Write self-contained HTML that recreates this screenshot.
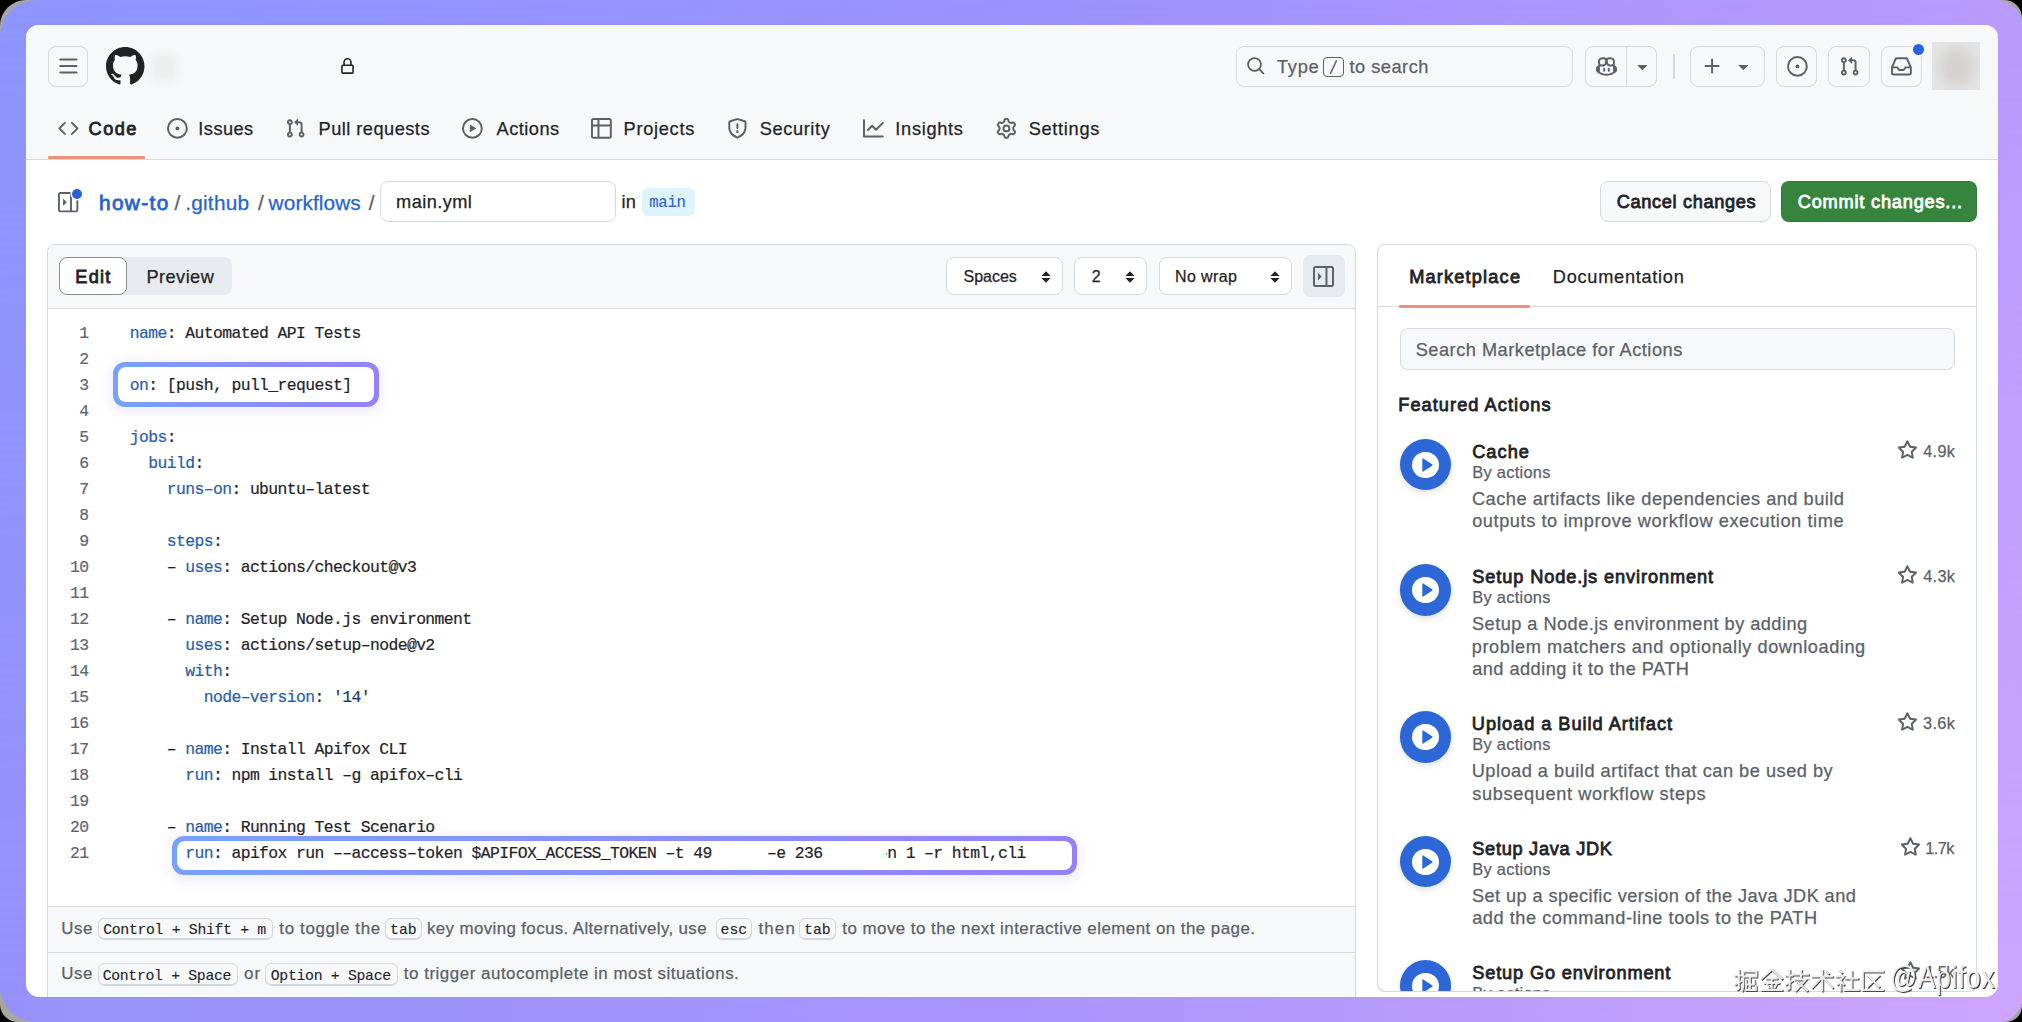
<!DOCTYPE html>
<html><head><meta charset="utf-8">
<style>
*{box-sizing:border-box;margin:0;padding:0}
html,body{width:2022px;height:1022px;overflow:hidden;background:#000}
body{font-family:"Liberation Sans",sans-serif;color:#1f2328;position:relative}
.bg0{position:absolute;left:0;top:0;width:2022px;height:1022px;border-radius:26px 18px 16px 18px;background:#a7a7a2}
.bg{position:absolute;left:0;top:0;width:2022px;height:1022px;border-radius:36px 26px 24px 36px;overflow:hidden;background:linear-gradient(90deg,rgb(140,150,251) 0%,rgb(155,145,252) 50%,rgb(185,155,253) 100%)}
.bg2{position:absolute;left:0;top:0;width:2022px;height:1022px;background:linear-gradient(90deg,rgb(150,145,250) 0%,rgb(168,148,252) 50%,rgb(206,165,253) 100%);-webkit-mask-image:linear-gradient(to bottom,transparent,#000);mask-image:linear-gradient(to bottom,transparent,#000)}
.card{position:absolute;left:0;top:0;width:2022px;height:1022px;background:#fff;clip-path:inset(25px 24px 25px 26px round 13px)}
.a{position:absolute}
svg{display:block;position:absolute;overflow:visible}
.t{position:absolute;white-space:pre;line-height:1}
</style></head><body>
<div class="bg0"></div><div class="bg"><div class="bg2"></div></div>
<div class="card">
<div class="a" style="left:26px;top:25px;width:1972px;height:135px;background:#f6f8fa;border-bottom:1px solid #d4d9de"></div>
<div class="a" style="left:48px;top:46px;width:40px;height:41px;border:1px solid #d4d9de;border-radius:8px;background:#f6f8fa"></div>
<svg style="left:57.70px;top:56.20px;" width="20.8" height="20.8" viewBox="0 0 16 16" fill="#5a6168"><path d="M1 2.75A.75.75 0 0 1 1.75 2h12.5a.75.75 0 0 1 0 1.5H1.75A.75.75 0 0 1 1 2.75Zm0 5A.75.75 0 0 1 1.75 7h12.5a.75.75 0 0 1 0 1.5H1.75A.75.75 0 0 1 1 7.75ZM1.75 12h12.5a.75.75 0 0 1 0 1.5H1.75a.75.75 0 0 1 0-1.5Z"/></svg>
<svg style="left:106.00px;top:47.00px;" width="38.5" height="38.5" viewBox="0 0 16 16" fill="#1f2328"><path d="M8 0c4.42 0 8 3.58 8 8a8.013 8.013 0 0 1-5.45 7.59c-.4.08-.55-.17-.55-.38 0-.27.01-1.13.01-2.2 0-.75-.25-1.23-.54-1.48 1.78-.2 3.65-.88 3.65-3.95 0-.88-.31-1.59-.82-2.15.08-.2.36-1.02-.08-2.12 0 0-.67-.22-2.2.82-.64-.18-1.32-.27-2-.27-.68 0-1.36.09-2 .27-1.53-1.03-2.2-.82-2.2-.82-.44 1.1-.16 1.92-.08 2.12-.51.56-.82 1.28-.82 2.15 0 3.06 1.86 3.75 3.64 3.95-.23.2-.44.55-.51 1.07-.46.21-1.61.55-2.33-.66-.15-.24-.6-.83-1.23-.82-.67.01-.27.38.01.53.34.19.73.9.82 1.13.16.45.68 1.31 2.69.94 0 .67.01 1.3.01 1.49 0 .21-.15.45-.55.38A7.995 7.995 0 0 1 0 8c0-4.42 3.58-8 8-8Z"/></svg>
<div class="a" style="left:152px;top:54px;width:24px;height:26px;background:#eceded;filter:blur(4px);border-radius:4px"></div>
<svg style="left:338.80px;top:57.50px;" width="17" height="17" viewBox="0 0 16 16" fill="#1f2328"><path d="M4 4a4 4 0 0 1 8 0v2h.25c.966 0 1.75.784 1.75 1.75v5.5A1.75 1.75 0 0 1 12.25 15h-8.5A1.75 1.75 0 0 1 2 13.25v-5.5C2 6.784 2.784 6 3.75 6H4Zm8.25 3.5h-8.5a.25.25 0 0 0-.25.25v5.5c0 .138.112.25.25.25h8.5a.25.25 0 0 0 .25-.25v-5.5a.25.25 0 0 0-.25-.25ZM10.5 6V4a2.5 2.5 0 1 0-5 0v2Z"/></svg>
<div class="a" style="left:1236px;top:46px;width:337px;height:41px;border:1px solid #d4d9de;border-radius:8px;background:#f6f8fa"></div>
<svg style="left:1246.00px;top:56.30px;" width="19.5" height="19.5" viewBox="0 0 16 16" fill="#5a6168"><path d="M10.68 11.74a6 6 0 0 1-7.922-8.982 6 6 0 0 1 8.982 7.922l3.04 3.04a.749.749 0 0 1-.326 1.275.749.749 0 0 1-.734-.215ZM11.5 7a4.499 4.499 0 1 0-8.997 0A4.499 4.499 0 0 0 11.5 7Z"/></svg>
<div class="t" style="left:1276.94px;top:58px;font-size:18.2px;color:#5a6168;font-family:'Liberation Sans',sans-serif;-webkit-text-stroke:0.25px #5a6168;letter-spacing:0.778px;">Type</div>
<div class="a" style="left:1323px;top:57px;width:21px;height:20px;border:1px solid #5a6168;border-radius:4px"></div>
<svg style="left:1323px;top:57px" width="21" height="20" viewBox="0 0 21 20"><path d="M7.6 16.3 L13.4 3.7" stroke="#5a6168" stroke-width="1.5" stroke-linecap="round"/></svg>
<div class="t" style="left:1349.52px;top:58px;font-size:18.2px;color:#5a6168;font-family:'Liberation Sans',sans-serif;-webkit-text-stroke:0.25px #5a6168;letter-spacing:0.504px;">to search</div>
<div class="a" style="left:1585px;top:46px;width:72px;height:41px;border:1px solid #d4d9de;border-radius:8px;background:#f6f8fa"></div>
<div class="a" style="left:1626px;top:46px;width:1px;height:41px;background:#d4d9de"></div>
<svg style="left:1595.50px;top:55.70px;" width="21" height="21" viewBox="0 0 16 16" fill="#5a6168"><path d="M7.998 15.035c-4.562 0-7.873-2.914-7.998-3.749V9.338c.085-.628.677-1.686 1.588-2.065.013-.07.024-.143.036-.218.029-.183.06-.384.126-.612-.201-.508-.254-1.084-.254-1.656 0-.87.128-1.769.693-2.484.579-.733 1.494-1.124 2.724-1.261 1.206-.134 2.262.034 2.944.765.05.053.096.108.139.165.044-.057.094-.112.143-.165.682-.731 1.738-.899 2.944-.765 1.23.137 2.145.528 2.724 1.261.566.715.693 1.614.693 2.484 0 .572-.053 1.148-.254 1.656.066.228.098.429.126.612.012.076.024.148.037.218.924.385 1.522 1.471 1.591 2.095v1.872c0 .766-3.351 3.795-8.002 3.795Zm0-1.485c2.28 0 4.584-1.11 5.002-1.433V7.862l-.023-.116c-.49.21-1.075.291-1.727.291-1.146 0-2.059-.327-2.71-.991A3.222 3.222 0 0 1 8 6.303a3.24 3.24 0 0 1-.544.743c-.65.664-1.563.991-2.71.991-.652 0-1.236-.081-1.727-.291l-.023.116v4.255c.419.323 2.722 1.433 5.002 1.433ZM6.762 2.83c-.193-.206-.637-.413-1.682-.297-1.019.113-1.479.404-1.713.7-.247.312-.369.789-.369 1.554 0 .793.129 1.171.308 1.371.162.181.519.379 1.442.379.853 0 1.339-.235 1.638-.54.315-.322.527-.827.617-1.553.117-.935-.037-1.395-.241-1.614Zm4.155-.297c-1.044-.116-1.488.091-1.681.297-.204.219-.359.679-.242 1.614.091.726.303 1.231.618 1.553.299.305.784.54 1.638.54.922 0 1.28-.198 1.442-.379.179-.2.308-.578.308-1.371 0-.765-.123-1.242-.37-1.554-.233-.296-.693-.587-1.713-.7Z"/><path d="M6.25 9.037a.75.75 0 0 1 .75.75v1.501a.75.75 0 0 1-1.5 0V9.787a.75.75 0 0 1 .75-.75Zm4.25.75v1.501a.75.75 0 0 1-1.5 0V9.787a.75.75 0 0 1 1.5 0Z"/></svg>
<svg style="left:1631.50px;top:55.80px;" width="20.8" height="20.8" viewBox="0 0 16 16" fill="#5a6168"><path d="m4.427 7.427 3.396 3.396a.25.25 0 0 0 .354 0l3.396-3.396A.25.25 0 0 0 11.396 7H4.604a.25.25 0 0 0-.177.427Z"/></svg>
<div class="a" style="left:1673px;top:54px;width:2px;height:25px;background:#d4d9de"></div>
<div class="a" style="left:1690px;top:46px;width:75px;height:41px;border:1px solid #d4d9de;border-radius:8px;background:#f6f8fa"></div>
<svg style="left:1701.60px;top:55.80px;" width="20.8" height="20.8" viewBox="0 0 16 16" fill="#5a6168"><path d="M7.75 2a.75.75 0 0 1 .75.75V7h4.25a.75.75 0 0 1 0 1.5H8.5v4.25a.75.75 0 0 1-1.5 0V8.5H2.75a.75.75 0 0 1 0-1.5H7V2.75A.75.75 0 0 1 7.75 2Z"/></svg>
<svg style="left:1733.30px;top:55.80px;" width="20.8" height="20.8" viewBox="0 0 16 16" fill="#5a6168"><path d="m4.427 7.427 3.396 3.396a.25.25 0 0 0 .354 0l3.396-3.396A.25.25 0 0 0 11.396 7H4.604a.25.25 0 0 0-.177.427Z"/></svg>
<div class="a" style="left:1776px;top:46px;width:41px;height:41px;border:1px solid #d4d9de;border-radius:8px;background:#f6f8fa"></div>
<svg style="left:1787.00px;top:56.00px;" width="20.8" height="20.8" viewBox="0 0 16 16" fill="#5a6168"><path d="M8 9.5a1.5 1.5 0 1 0 0-3 1.5 1.5 0 0 0 0 3Z"/><path d="M8 0a8 8 0 1 1 0 16A8 8 0 0 1 8 0ZM1.5 8a6.5 6.5 0 1 0 13 0 6.5 6.5 0 0 0-13 0Z"/></svg>
<div class="a" style="left:1828px;top:46px;width:42px;height:41px;border:1px solid #d4d9de;border-radius:8px;background:#f6f8fa"></div>
<svg style="left:1839.00px;top:56.00px;" width="20.8" height="20.8" viewBox="0 0 16 16" fill="#5a6168"><path d="M1.5 3.25a2.25 2.25 0 1 1 3 2.122v5.256a2.251 2.251 0 1 1-1.5 0V5.372A2.25 2.25 0 0 1 1.5 3.25Zm5.677-.177L9.573.677A.25.25 0 0 1 10 .854V2.5h1A2.5 2.5 0 0 1 13.5 5v5.628a2.251 2.251 0 1 1-1.5 0V5a1 1 0 0 0-1-1h-1v1.646a.25.25 0 0 1-.427.177L7.177 3.427a.25.25 0 0 1 0-.354ZM3.75 2.5a.75.75 0 1 0 0 1.5.75.75 0 0 0 0-1.5Zm0 9.5a.75.75 0 1 0 0 1.5.75.75 0 0 0 0-1.5Zm8.25.75a.75.75 0 1 0 1.5 0 .75.75 0 0 0-1.5 0Z"/></svg>
<div class="a" style="left:1881px;top:46px;width:41px;height:41px;border:1px solid #d4d9de;border-radius:8px;background:#f6f8fa"></div>
<svg style="left:1891.00px;top:55.50px;" width="20.8" height="20.8" viewBox="0 0 16 16" fill="#5a6168"><path d="M2.8 2.06A1.75 1.75 0 0 1 4.41 1h7.18c.7 0 1.333.417 1.61 1.06l2.74 6.395c.04.093.06.194.06.295v4.5A1.75 1.75 0 0 1 14.25 15H1.75A1.75 1.75 0 0 1 0 13.25v-4.5c0-.101.02-.202.06-.295Zm1.61.44a.25.25 0 0 0-.23.152L1.887 8H4.75a.75.75 0 0 1 .6.3L6.625 10h2.75l1.275-1.7a.75.75 0 0 1 .6-.3h2.863L11.82 2.652a.25.25 0 0 0-.23-.152Zm10.09 7h-2.875l-1.275 1.7a.75.75 0 0 1-.6.3h-3.5a.75.75 0 0 1-.6-.3L4.375 9.5H1.5v3.75c0 .138.112.25.25.25h12.5a.25.25 0 0 0 .25-.25Z"/></svg>
<div class="a" style="left:1912.8px;top:43.7px;width:11.0px;height:11.0px;border-radius:50%;background:#2563e0;box-shadow:0 0 0 1.5px #f6f8fa"></div>
<div class="a" style="left:1932px;top:42px;width:48px;height:48px;overflow:hidden;background:#e4e4e4"><div class="a" style="left:8px;top:6px;width:34px;height:38px;border-radius:50%;background:#d4d1d0;filter:blur(6px)"></div></div>
<svg style="left:57.50px;top:118.35px;" width="20.8" height="20.8" viewBox="0 0 16 16" fill="#5a6168"><path d="m11.28 3.22 4.25 4.25a.75.75 0 0 1 0 1.06l-4.25 4.25a.749.749 0 0 1-1.275-.326.749.749 0 0 1 .215-.734L13.94 8l-3.72-3.72a.749.749 0 0 1 .326-1.275.749.749 0 0 1 .734.215Zm-6.56 0a.751.751 0 0 1 1.042.018.751.751 0 0 1 .018 1.042L2.06 8l3.72 3.72a.749.749 0 0 1-.326 1.275.749.749 0 0 1-.734-.215L.47 8.53a.75.75 0 0 1 0-1.06Z"/></svg>
<div class="t" style="left:88.59px;top:120px;font-size:18.2px;color:#1f2328;font-family:'Liberation Sans',sans-serif;-webkit-text-stroke:0.8px #1f2328;letter-spacing:1.443px;">Code</div>
<svg style="left:167.00px;top:118.35px;" width="20.8" height="20.8" viewBox="0 0 16 16" fill="#5a6168"><path d="M8 9.5a1.5 1.5 0 1 0 0-3 1.5 1.5 0 0 0 0 3Z"/><path d="M8 0a8 8 0 1 1 0 16A8 8 0 0 1 8 0ZM1.5 8a6.5 6.5 0 1 0 13 0 6.5 6.5 0 0 0-13 0Z"/></svg>
<div class="t" style="left:198.36px;top:120px;font-size:18.2px;color:#1f2328;font-family:'Liberation Sans',sans-serif;-webkit-text-stroke:0.25px #1f2328;letter-spacing:0.437px;">Issues</div>
<svg style="left:284.60px;top:118.35px;" width="20.8" height="20.8" viewBox="0 0 16 16" fill="#5a6168"><path d="M1.5 3.25a2.25 2.25 0 1 1 3 2.122v5.256a2.251 2.251 0 1 1-1.5 0V5.372A2.25 2.25 0 0 1 1.5 3.25Zm5.677-.177L9.573.677A.25.25 0 0 1 10 .854V2.5h1A2.5 2.5 0 0 1 13.5 5v5.628a2.251 2.251 0 1 1-1.5 0V5a1 1 0 0 0-1-1h-1v1.646a.25.25 0 0 1-.427.177L7.177 3.427a.25.25 0 0 1 0-.354ZM3.75 2.5a.75.75 0 1 0 0 1.5.75.75 0 0 0 0-1.5Zm0 9.5a.75.75 0 1 0 0 1.5.75.75 0 0 0 0-1.5Zm8.25.75a.75.75 0 1 0 1.5 0 .75.75 0 0 0-1.5 0Z"/></svg>
<div class="t" style="left:318.54px;top:120px;font-size:18.2px;color:#1f2328;font-family:'Liberation Sans',sans-serif;-webkit-text-stroke:0.25px #1f2328;letter-spacing:0.484px;">Pull requests</div>
<svg style="left:462.40px;top:118.35px;" width="20.8" height="20.8" viewBox="0 0 16 16" fill="#5a6168"><path d="M8 0a8 8 0 1 1 0 16A8 8 0 0 1 8 0ZM1.5 8a6.5 6.5 0 1 0 13 0 6.5 6.5 0 0 0-13 0Zm4.879-2.773 4.264 2.559a.25.25 0 0 1 0 .428l-4.264 2.559A.25.25 0 0 1 6 10.559V5.442a.25.25 0 0 1 .379-.215Z"/></svg>
<div class="t" style="left:496.50px;top:120px;font-size:18.2px;color:#1f2328;font-family:'Liberation Sans',sans-serif;-webkit-text-stroke:0.25px #1f2328;letter-spacing:0.505px;">Actions</div>
<svg style="left:591.00px;top:118.35px;" width="20.8" height="20.8" viewBox="0 0 16 16" fill="#5a6168"><path d="M0 1.75C0 .784.784 0 1.75 0h12.5C15.216 0 16 .784 16 1.75v12.5A1.75 1.75 0 0 1 14.25 16H1.75A1.75 1.75 0 0 1 0 14.25ZM6.5 6.5v8h7.75a.25.25 0 0 0 .25-.25V6.5Zm8-1.5V1.75a.25.25 0 0 0-.25-.25H6.5V5Zm-13 1.5v7.750c0 .138.112.25.25.25H5v-8ZM5 5V1.5H1.75a.25.25 0 0 0-.25.25V5Z"/></svg>
<div class="t" style="left:623.54px;top:120px;font-size:18.2px;color:#1f2328;font-family:'Liberation Sans',sans-serif;-webkit-text-stroke:0.25px #1f2328;letter-spacing:0.720px;">Projects</div>
<svg style="left:727.00px;top:118.35px;" width="20.8" height="20.8" viewBox="0 0 16 16" fill="#5a6168"><path d="M7.467.133a1.748 1.748 0 0 1 1.066 0l5.25 1.68A1.75 1.75 0 0 1 15 3.48V7c0 1.566-.32 3.182-1.303 4.682-.983 1.498-2.585 2.813-5.032 3.855a1.697 1.697 0 0 1-1.33 0c-2.447-1.042-4.049-2.357-5.032-3.855C1.32 10.182 1 8.566 1 7V3.48a1.755 1.755 0 0 1 1.217-1.667Zm.61 1.429a.25.25 0 0 0-.153 0l-5.25 1.68a.25.25 0 0 0-.174.238V7c0 1.358.275 2.666 1.057 3.86.784 1.194 2.121 2.34 4.366 3.297a.196.196 0 0 0 .154 0c2.245-.956 3.582-2.104 4.366-3.298C13.225 9.666 13.5 8.36 13.5 7V3.48a.251.251 0 0 0-.174-.237l-5.25-1.68ZM8.75 4.75v3a.75.75 0 0 1-1.5 0v-3a.75.75 0 0 1 1.5 0ZM9 10.5a1 1 0 1 1-2 0 1 1 0 0 1 2 0Z"/></svg>
<div class="t" style="left:759.69px;top:120px;font-size:18.2px;color:#1f2328;font-family:'Liberation Sans',sans-serif;-webkit-text-stroke:0.25px #1f2328;letter-spacing:0.621px;">Security</div>
<svg style="left:862.50px;top:118.35px;" width="20.8" height="20.8" viewBox="0 0 16 16" fill="#5a6168"><path d="M1.5 1.75V13.5h13.75a.75.75 0 0 1 0 1.5H.75a.75.75 0 0 1-.75-.75V1.75a.75.75 0 0 1 1.5 0Zm14.28 2.53-5.25 5.25a.75.75 0 0 1-1.06 0L7 7.06 4.28 9.78a.751.751 0 0 1-1.042-.018.751.751 0 0 1-.018-1.042l3.25-3.25a.75.75 0 0 1 1.06 0L10 7.94l4.72-4.72a.751.751 0 0 1 1.042.018.751.751 0 0 1 .018 1.042Z"/></svg>
<div class="t" style="left:895.36px;top:120px;font-size:18.2px;color:#1f2328;font-family:'Liberation Sans',sans-serif;-webkit-text-stroke:0.25px #1f2328;letter-spacing:0.688px;">Insights</div>
<svg style="left:996.00px;top:118.35px;" width="20.8" height="20.8" viewBox="0 0 16 16" fill="#5a6168"><path d="M8 0a8.2 8.2 0 0 1 .701.031C9.444.095 9.99.645 10.16 1.29l.288 1.107c.018.066.079.158.212.224.231.114.454.243.668.386.123.082.233.09.299.071l1.103-.303c.644-.176 1.392.021 1.82.63.27.385.506.792.704 1.218.315.675.111 1.422-.364 1.891l-.814.806c-.049.048-.098.147-.088.294.016.257.016.515 0 .772-.01.147.038.246.088.294l.814.806c.475.469.679 1.216.364 1.891a7.977 7.977 0 0 1-.704 1.217c-.428.61-1.176.807-1.82.63l-1.102-.302c-.067-.019-.177-.011-.3.071a5.909 5.909 0 0 1-.668.386c-.133.066-.194.158-.211.224l-.29 1.106c-.168.646-.715 1.196-1.458 1.26a8.006 8.006 0 0 1-1.402 0c-.743-.064-1.289-.614-1.458-1.26l-.289-1.106c-.018-.066-.079-.158-.212-.224a5.738 5.738 0 0 1-.668-.386c-.123-.082-.233-.09-.299-.071l-1.103.303c-.644.176-1.392-.021-1.82-.63a8.12 8.12 0 0 1-.704-1.218c-.315-.675-.111-1.422.363-1.891l.815-.806c.05-.048.098-.147.088-.294a6.214 6.214 0 0 1 0-.772c.01-.147-.038-.246-.088-.294l-.815-.806C.635 6.045.431 5.298.746 4.623a7.92 7.92 0 0 1 .704-1.217c.428-.61 1.176-.807 1.82-.63l1.102.302c.067.019.177.011.3-.071.214-.143.437-.272.668-.386.133-.066.194-.158.211-.224l.29-1.106C6.009.645 6.556.095 7.299.03 7.53.01 7.764 0 8 0Zm-.571 1.525c-.036.003-.108.036-.137.146l-.289 1.105c-.147.561-.549.967-.998 1.189-.173.086-.34.183-.5.29-.417.278-.97.423-1.529.27l-1.103-.303c-.109-.03-.175.016-.195.045-.22.312-.412.644-.573.99-.014.031-.021.11.059.19l.815.806c.411.406.562.957.53 1.456a4.709 4.709 0 0 0 0 .582c.032.499-.119 1.05-.53 1.456l-.815.806c-.081.08-.073.159-.059.19.162.346.353.677.573.989.02.03.085.076.195.046l1.102-.303c.56-.153 1.113-.008 1.53.27.161.107.328.204.501.29.447.222.85.629.997 1.189l.289 1.105c.029.109.101.143.137.146a6.6 6.6 0 0 0 1.142 0c.036-.003.108-.036.137-.146l.289-1.105c.147-.561.549-.967.998-1.189.173-.086.34-.183.5-.29.417-.278.97-.423 1.529-.27l1.103.303c.109.029.175-.016.195-.045.22-.313.411-.644.573-.99.014-.031.021-.11-.059-.19l-.815-.806c-.411-.406-.562-.957-.53-1.456a4.709 4.709 0 0 0 0-.582c-.032-.499.119-1.05.53-1.456l.815-.806c.081-.08.073-.159.059-.19a6.464 6.464 0 0 0-.573-.989c-.02-.03-.085-.076-.195-.046l-1.102.303c-.56.153-1.113.008-1.53-.27a4.44 4.44 0 0 0-.501-.29c-.447-.222-.85-.629-.997-1.189l-.289-1.105c-.029-.11-.101-.143-.137-.146a6.6 6.6 0 0 0-1.142 0ZM11 8a3 3 0 1 1-6 0 3 3 0 0 1 6 0ZM9.5 8a1.5 1.5 0 1 0-3.001.001A1.5 1.5 0 0 0 9.5 8Z"/></svg>
<div class="t" style="left:1028.69px;top:120px;font-size:18.2px;color:#1f2328;font-family:'Liberation Sans',sans-serif;-webkit-text-stroke:0.25px #1f2328;letter-spacing:0.702px;">Settings</div>
<div class="a" style="left:48px;top:156px;width:97px;height:3px;background:#ea927b;border-radius:1px"></div>
<svg style="left:57.90px;top:191.90px;" width="20.3" height="20.3" viewBox="0 0 16 16" fill="#5a6168"><path d="M6.823 7.823a.25.25 0 0 1 0 .354l-2.396 2.396A.25.25 0 0 1 4 10.396V5.604a.25.25 0 0 1 .427-.177Z"/><path d="M1.75 0h12.5C15.216 0 16 .784 16 1.75v12.5A1.75 1.75 0 0 1 14.25 16H1.75A1.75 1.75 0 0 1 0 14.25V1.75C0 .784.784 0 1.75 0ZM1.5 1.75v12.5c0 .138.112.25.25.25H9.5v-13H1.75a.25.25 0 0 0-.25.25ZM11 14.5h3.25a.25.25 0 0 0 .25-.25V1.75a.25.25 0 0 0-.25-.25H11Z"/></svg>
<div class="a" style="left:72.2px;top:188.8px;width:10.200000000000003px;height:10.199999999999989px;border-radius:50%;background:#2563d9;box-shadow:0 0 0 1.5px #fff"></div>
<div class="t" style="left:98.94px;top:193px;font-size:20.8px;color:#2763cf;font-family:'Liberation Sans',sans-serif;-webkit-text-stroke:0.8px #2763cf;letter-spacing:1.381px;">how-to</div>
<div class="t" style="left:174.50px;top:193px;font-size:20.8px;color:#5a6168;font-family:'Liberation Sans',sans-serif;-webkit-text-stroke:0.25px #5a6168;">/</div>
<div class="t" style="left:185.13px;top:193px;font-size:20.8px;color:#2763cf;font-family:'Liberation Sans',sans-serif;-webkit-text-stroke:0.25px #2763cf;letter-spacing:0.257px;">.github</div>
<div class="t" style="left:258.00px;top:193px;font-size:20.8px;color:#5a6168;font-family:'Liberation Sans',sans-serif;-webkit-text-stroke:0.25px #5a6168;">/</div>
<div class="t" style="left:268.60px;top:193px;font-size:20.8px;color:#2763cf;font-family:'Liberation Sans',sans-serif;-webkit-text-stroke:0.25px #2763cf;letter-spacing:0.102px;">workflows</div>
<div class="t" style="left:368.80px;top:193px;font-size:20.8px;color:#5a6168;font-family:'Liberation Sans',sans-serif;-webkit-text-stroke:0.25px #5a6168;">/</div>
<div class="a" style="left:380px;top:181px;width:236px;height:41px;border:1px solid #d4d9de;border-radius:8px;background:#fff"></div>
<div class="t" style="left:396.11px;top:193px;font-size:18.2px;color:#1f2328;font-family:'Liberation Sans',sans-serif;-webkit-text-stroke:0.25px #1f2328;letter-spacing:0.427px;">main.yml</div>
<div class="t" style="left:621.61px;top:193px;font-size:18.2px;color:#1f2328;font-family:'Liberation Sans',sans-serif;-webkit-text-stroke:0.25px #1f2328;">in</div>
<div class="a" style="left:642px;top:188px;width:53px;height:28px;background:#ddf4ff;border-radius:6px"></div>
<div class="t" style="left:649.22px;top:196px;font-size:15.6px;color:#2763cf;font-family:'Liberation Mono',monospace;-webkit-text-stroke:0.12px #2763cf;letter-spacing:-0.269px;">main</div>
<div class="a" style="left:1600px;top:181px;width:171px;height:41px;border:1px solid #d4d9de;border-radius:8px;background:#f6f8fa"></div>
<div class="t" style="left:1616.79px;top:193px;font-size:18.2px;color:#1f2328;font-family:'Liberation Sans',sans-serif;-webkit-text-stroke:0.8px #1f2328;letter-spacing:0.652px;">Cancel changes</div>
<div class="a" style="left:1781px;top:181px;width:196px;height:41px;background:#36843d;border-radius:8px;box-shadow:inset 0 0 0 1px rgba(0,0,0,0.08)"></div>
<div class="t" style="left:1797.79px;top:193px;font-size:18.2px;color:#ffffff;font-family:'Liberation Sans',sans-serif;-webkit-text-stroke:0.8px #ffffff;letter-spacing:0.792px;">Commit changes...</div>
<div class="a" style="left:47px;top:244px;width:1309px;height:786px;border:1px solid #d4d9de;border-radius:8px;background:#fff"></div>
<div class="a" style="left:48px;top:245px;width:1307px;height:63px;background:#f6f8fa;border-radius:7px 7px 0 0"></div>
<div class="a" style="left:48px;top:308px;width:1307px;height:1px;background:#d4d9de"></div>
<div class="a" style="left:59px;top:257px;width:173px;height:38px;background:#e7ebef;border-radius:8px"></div>
<div class="a" style="left:59px;top:257px;width:68px;height:38px;background:#fff;border:1.3px solid #858f99;border-radius:8px"></div>
<div class="t" style="left:75.34px;top:268px;font-size:18.2px;color:#1f2328;font-family:'Liberation Sans',sans-serif;-webkit-text-stroke:0.8px #1f2328;letter-spacing:1.171px;">Edit</div>
<div class="t" style="left:146.44px;top:268px;font-size:18.2px;color:#1f2328;font-family:'Liberation Sans',sans-serif;-webkit-text-stroke:0.25px #1f2328;letter-spacing:0.449px;">Preview</div>
<div class="a" style="left:946px;top:257px;width:117px;height:38px;border:1px solid #d4d9de;border-radius:8px;background:#fff"></div>
<div class="t" style="left:963.50px;top:269px;font-size:16px;color:#1f2328;font-family:'Liberation Sans',sans-serif;-webkit-text-stroke:0.25px #1f2328;letter-spacing:-0.019px;">Spaces</div>
<svg style="left:1040.8px;top:270.5px" width="10" height="12" viewBox="0 0 10 12" fill="#1f2328"><path d="M5 0.3 L9.6 5 H0.4Z M5 11.7 L9.6 7 H0.4Z"/></svg>
<div class="a" style="left:1074px;top:257px;width:73px;height:38px;border:1px solid #d4d9de;border-radius:8px;background:#fff"></div>
<div class="t" style="left:1091.70px;top:269px;font-size:16px;color:#1f2328;font-family:'Liberation Sans',sans-serif;-webkit-text-stroke:0.25px #1f2328;">2</div>
<svg style="left:1124.6px;top:270.5px" width="10" height="12" viewBox="0 0 10 12" fill="#1f2328"><path d="M5 0.3 L9.6 5 H0.4Z M5 11.7 L9.6 7 H0.4Z"/></svg>
<div class="a" style="left:1159px;top:257px;width:133px;height:38px;border:1px solid #d4d9de;border-radius:8px;background:#fff"></div>
<div class="t" style="left:1175.02px;top:269px;font-size:16px;color:#1f2328;font-family:'Liberation Sans',sans-serif;-webkit-text-stroke:0.25px #1f2328;letter-spacing:0.386px;">No wrap</div>
<svg style="left:1270.2px;top:270.5px" width="10" height="12" viewBox="0 0 10 12" fill="#1f2328"><path d="M5 0.3 L9.6 5 H0.4Z M5 11.7 L9.6 7 H0.4Z"/></svg>
<div class="a" style="left:1303px;top:255px;width:42px;height:42px;background:#e7ebef;border-radius:8px"></div>
<svg style="left:1313px;top:265.5px" width="21" height="21" viewBox="0 0 16 16" fill="#5a6168"><path d="M1.75 0h12.5C15.216 0 16 .784 16 1.75v12.5A1.75 1.75 0 0 1 14.25 16H1.75A1.75 1.75 0 0 1 0 14.25V1.75C0 .784.784 0 1.75 0ZM1.5 1.75v12.5c0 .138.112.25.25.25H9.5v-13H1.75a.25.25 0 0 0-.25.25ZM11 14.5h3.25a.25.25 0 0 0 .25-.25V1.75a.25.25 0 0 0-.25-.25H11Z"/><path d="M3.8 5.2 L6.6 8 L3.8 10.8Z"/></svg>
<div class="a" style="left:109px;top:360px;width:274px;height:55px;border-radius:16px;background:rgba(120,110,230,0.10);filter:blur(6px)"></div>
<div class="a" style="left:113px;top:362px;width:266px;height:45px;border-radius:12px;background:linear-gradient(90deg,#76a2fa,#9581f9)"></div>
<div class="a" style="left:118px;top:367px;width:256px;height:35px;border-radius:8px;background:#fff"></div>
<div class="a" style="left:168px;top:834px;width:913px;height:49px;border-radius:16px;background:rgba(120,110,230,0.10);filter:blur(6px)"></div>
<div class="a" style="left:172px;top:836px;width:905px;height:39px;border-radius:12px;background:linear-gradient(90deg,#76a2fa,#9581f9)"></div>
<div class="a" style="left:177px;top:841px;width:895px;height:29px;border-radius:8px;background:#fff"></div>
<div class="t" style="left:27.5px;width:61px;text-align:right;top:326px;font-size:16.4px;letter-spacing:-0.6px;-webkit-text-stroke:0.2px #5d666f;color:#5d666f;font-family:'Liberation Mono',monospace">1</div>
<div class="t" style="left:129.80px;top:326px;font-size:16.4px;letter-spacing:-0.6px;-webkit-text-stroke:0.2px;font-family:'Liberation Mono',monospace"><span style="color:#2b5cad">name</span><span style="color:#1f2328">: Automated API Tests</span></div>
<div class="t" style="left:27.5px;width:61px;text-align:right;top:352px;font-size:16.4px;letter-spacing:-0.6px;-webkit-text-stroke:0.2px #5d666f;color:#5d666f;font-family:'Liberation Mono',monospace">2</div>
<div class="t" style="left:27.5px;width:61px;text-align:right;top:378px;font-size:16.4px;letter-spacing:-0.6px;-webkit-text-stroke:0.2px #5d666f;color:#5d666f;font-family:'Liberation Mono',monospace">3</div>
<div class="t" style="left:129.80px;top:378px;font-size:16.4px;letter-spacing:-0.6px;-webkit-text-stroke:0.2px;font-family:'Liberation Mono',monospace"><span style="color:#2b5cad">on</span><span style="color:#1f2328">: [push, pull_request]</span></div>
<div class="t" style="left:27.5px;width:61px;text-align:right;top:404px;font-size:16.4px;letter-spacing:-0.6px;-webkit-text-stroke:0.2px #5d666f;color:#5d666f;font-family:'Liberation Mono',monospace">4</div>
<div class="t" style="left:27.5px;width:61px;text-align:right;top:430px;font-size:16.4px;letter-spacing:-0.6px;-webkit-text-stroke:0.2px #5d666f;color:#5d666f;font-family:'Liberation Mono',monospace">5</div>
<div class="t" style="left:129.80px;top:430px;font-size:16.4px;letter-spacing:-0.6px;-webkit-text-stroke:0.2px;font-family:'Liberation Mono',monospace"><span style="color:#2b5cad">jobs</span><span style="color:#1f2328">:</span></div>
<div class="t" style="left:27.5px;width:61px;text-align:right;top:456px;font-size:16.4px;letter-spacing:-0.6px;-webkit-text-stroke:0.2px #5d666f;color:#5d666f;font-family:'Liberation Mono',monospace">6</div>
<div class="t" style="left:129.80px;top:456px;font-size:16.4px;letter-spacing:-0.6px;-webkit-text-stroke:0.2px;font-family:'Liberation Mono',monospace"><span style="color:#1f2328">  </span><span style="color:#2b5cad">build</span><span style="color:#1f2328">:</span></div>
<div class="t" style="left:27.5px;width:61px;text-align:right;top:482px;font-size:16.4px;letter-spacing:-0.6px;-webkit-text-stroke:0.2px #5d666f;color:#5d666f;font-family:'Liberation Mono',monospace">7</div>
<div class="t" style="left:129.80px;top:482px;font-size:16.4px;letter-spacing:-0.6px;-webkit-text-stroke:0.2px;font-family:'Liberation Mono',monospace"><span style="color:#1f2328">    </span><span style="color:#2b5cad">runs&#8211;on</span><span style="color:#1f2328">: ubuntu&#8211;latest</span></div>
<div class="t" style="left:27.5px;width:61px;text-align:right;top:508px;font-size:16.4px;letter-spacing:-0.6px;-webkit-text-stroke:0.2px #5d666f;color:#5d666f;font-family:'Liberation Mono',monospace">8</div>
<div class="t" style="left:27.5px;width:61px;text-align:right;top:534px;font-size:16.4px;letter-spacing:-0.6px;-webkit-text-stroke:0.2px #5d666f;color:#5d666f;font-family:'Liberation Mono',monospace">9</div>
<div class="t" style="left:129.80px;top:534px;font-size:16.4px;letter-spacing:-0.6px;-webkit-text-stroke:0.2px;font-family:'Liberation Mono',monospace"><span style="color:#1f2328">    </span><span style="color:#2b5cad">steps</span><span style="color:#1f2328">:</span></div>
<div class="t" style="left:27.5px;width:61px;text-align:right;top:560px;font-size:16.4px;letter-spacing:-0.6px;-webkit-text-stroke:0.2px #5d666f;color:#5d666f;font-family:'Liberation Mono',monospace">10</div>
<div class="t" style="left:129.80px;top:560px;font-size:16.4px;letter-spacing:-0.6px;-webkit-text-stroke:0.2px;font-family:'Liberation Mono',monospace"><span style="color:#1f2328">    &#8211; </span><span style="color:#2b5cad">uses</span><span style="color:#1f2328">: actions/checkout@v3</span></div>
<div class="t" style="left:27.5px;width:61px;text-align:right;top:586px;font-size:16.4px;letter-spacing:-0.6px;-webkit-text-stroke:0.2px #5d666f;color:#5d666f;font-family:'Liberation Mono',monospace">11</div>
<div class="t" style="left:27.5px;width:61px;text-align:right;top:612px;font-size:16.4px;letter-spacing:-0.6px;-webkit-text-stroke:0.2px #5d666f;color:#5d666f;font-family:'Liberation Mono',monospace">12</div>
<div class="t" style="left:129.80px;top:612px;font-size:16.4px;letter-spacing:-0.6px;-webkit-text-stroke:0.2px;font-family:'Liberation Mono',monospace"><span style="color:#1f2328">    &#8211; </span><span style="color:#2b5cad">name</span><span style="color:#1f2328">: Setup Node.js environment</span></div>
<div class="t" style="left:27.5px;width:61px;text-align:right;top:638px;font-size:16.4px;letter-spacing:-0.6px;-webkit-text-stroke:0.2px #5d666f;color:#5d666f;font-family:'Liberation Mono',monospace">13</div>
<div class="t" style="left:129.80px;top:638px;font-size:16.4px;letter-spacing:-0.6px;-webkit-text-stroke:0.2px;font-family:'Liberation Mono',monospace"><span style="color:#1f2328">      </span><span style="color:#2b5cad">uses</span><span style="color:#1f2328">: actions/setup&#8211;node@v2</span></div>
<div class="t" style="left:27.5px;width:61px;text-align:right;top:664px;font-size:16.4px;letter-spacing:-0.6px;-webkit-text-stroke:0.2px #5d666f;color:#5d666f;font-family:'Liberation Mono',monospace">14</div>
<div class="t" style="left:129.80px;top:664px;font-size:16.4px;letter-spacing:-0.6px;-webkit-text-stroke:0.2px;font-family:'Liberation Mono',monospace"><span style="color:#1f2328">      </span><span style="color:#2b5cad">with</span><span style="color:#1f2328">:</span></div>
<div class="t" style="left:27.5px;width:61px;text-align:right;top:690px;font-size:16.4px;letter-spacing:-0.6px;-webkit-text-stroke:0.2px #5d666f;color:#5d666f;font-family:'Liberation Mono',monospace">15</div>
<div class="t" style="left:129.80px;top:690px;font-size:16.4px;letter-spacing:-0.6px;-webkit-text-stroke:0.2px;font-family:'Liberation Mono',monospace"><span style="color:#1f2328">        </span><span style="color:#2b5cad">node&#8211;version</span><span style="color:#1f2328">: </span><span style="color:#1c3a6e">'14'</span></div>
<div class="t" style="left:27.5px;width:61px;text-align:right;top:716px;font-size:16.4px;letter-spacing:-0.6px;-webkit-text-stroke:0.2px #5d666f;color:#5d666f;font-family:'Liberation Mono',monospace">16</div>
<div class="t" style="left:27.5px;width:61px;text-align:right;top:742px;font-size:16.4px;letter-spacing:-0.6px;-webkit-text-stroke:0.2px #5d666f;color:#5d666f;font-family:'Liberation Mono',monospace">17</div>
<div class="t" style="left:129.80px;top:742px;font-size:16.4px;letter-spacing:-0.6px;-webkit-text-stroke:0.2px;font-family:'Liberation Mono',monospace"><span style="color:#1f2328">    &#8211; </span><span style="color:#2b5cad">name</span><span style="color:#1f2328">: Install Apifox CLI</span></div>
<div class="t" style="left:27.5px;width:61px;text-align:right;top:768px;font-size:16.4px;letter-spacing:-0.6px;-webkit-text-stroke:0.2px #5d666f;color:#5d666f;font-family:'Liberation Mono',monospace">18</div>
<div class="t" style="left:129.80px;top:768px;font-size:16.4px;letter-spacing:-0.6px;-webkit-text-stroke:0.2px;font-family:'Liberation Mono',monospace"><span style="color:#1f2328">      </span><span style="color:#2b5cad">run</span><span style="color:#1f2328">: npm install &#8211;g apifox&#8211;cli</span></div>
<div class="t" style="left:27.5px;width:61px;text-align:right;top:794px;font-size:16.4px;letter-spacing:-0.6px;-webkit-text-stroke:0.2px #5d666f;color:#5d666f;font-family:'Liberation Mono',monospace">19</div>
<div class="t" style="left:27.5px;width:61px;text-align:right;top:820px;font-size:16.4px;letter-spacing:-0.6px;-webkit-text-stroke:0.2px #5d666f;color:#5d666f;font-family:'Liberation Mono',monospace">20</div>
<div class="t" style="left:129.80px;top:820px;font-size:16.4px;letter-spacing:-0.6px;-webkit-text-stroke:0.2px;font-family:'Liberation Mono',monospace"><span style="color:#1f2328">    &#8211; </span><span style="color:#2b5cad">name</span><span style="color:#1f2328">: Running Test Scenario</span></div>
<div class="t" style="left:27.5px;width:61px;text-align:right;top:846px;font-size:16.4px;letter-spacing:-0.6px;-webkit-text-stroke:0.2px #5d666f;color:#5d666f;font-family:'Liberation Mono',monospace">21</div>
<div class="t" style="left:129.80px;top:846px;font-size:16.4px;letter-spacing:-0.6px;-webkit-text-stroke:0.2px;font-family:'Liberation Mono',monospace"><span style="color:#1f2328">      </span><span style="color:#2b5cad">run</span><span style="color:#1f2328">: apifox run &#8211;&#8211;access&#8211;token $APIFOX_ACCESS_TOKEN &#8211;t 49      &#8211;e 236      &#8211;n 1 &#8211;r html,cli</span></div>
<div class="a" style="left:831px;top:842px;width:55px;height:27px;background:#fff"></div>
<div class="a" style="left:48px;top:906px;width:1307px;height:124px;background:#f6f8fa;border-top:1px solid #d4d9de"></div>
<div class="a" style="left:48px;top:952px;width:1307px;height:1px;background:#d4d9de"></div>
<div class="t" style="left:61.32px;top:921px;font-size:16.9px;color:#5a6168;font-family:'Liberation Sans',sans-serif;-webkit-text-stroke:0.25px #5a6168;letter-spacing:0.549px;">Use</div>
<div class="a" style="left:97.5px;top:917.5px;width:175.5px;height:22.5px;border:1px solid #d4d9de;border-radius:6px;background:#f6f8fa;box-shadow:inset 0 -1px 0 #d1d9e0"></div>
<div class="t" style="left:103.26px;top:923px;font-size:14.8px;color:#1f2328;font-family:'Liberation Mono',monospace;-webkit-text-stroke:0.12px #1f2328;letter-spacing:-0.321px;">Control + Shift + m</div>
<div class="t" style="left:279.33px;top:921px;font-size:16.9px;color:#5a6168;font-family:'Liberation Sans',sans-serif;-webkit-text-stroke:0.25px #5a6168;letter-spacing:0.651px;">to toggle the</div>
<div class="a" style="left:385px;top:917.5px;width:37px;height:22.5px;border:1px solid #d4d9de;border-radius:6px;background:#f6f8fa;box-shadow:inset 0 -1px 0 #d1d9e0"></div>
<div class="t" style="left:389.97px;top:923px;font-size:14.8px;color:#1f2328;font-family:'Liberation Mono',monospace;-webkit-text-stroke:0.12px #1f2328;letter-spacing:0.037px;">tab</div>
<div class="t" style="left:426.99px;top:921px;font-size:16.9px;color:#5a6168;font-family:'Liberation Sans',sans-serif;-webkit-text-stroke:0.25px #5a6168;letter-spacing:0.380px;">key moving focus. Alternatively, use</div>
<div class="a" style="left:715.8px;top:917.5px;width:36.200000000000045px;height:22.5px;border:1px solid #d4d9de;border-radius:6px;background:#f6f8fa;box-shadow:inset 0 -1px 0 #d1d9e0"></div>
<div class="t" style="left:720.61px;top:923px;font-size:14.8px;color:#1f2328;font-family:'Liberation Mono',monospace;-webkit-text-stroke:0.12px #1f2328;letter-spacing:-0.085px;">esc</div>
<div class="t" style="left:758.43px;top:921px;font-size:16.9px;color:#5a6168;font-family:'Liberation Sans',sans-serif;-webkit-text-stroke:0.25px #5a6168;letter-spacing:1.162px;">then</div>
<div class="a" style="left:799.4px;top:917.5px;width:36.60000000000002px;height:22.5px;border:1px solid #d4d9de;border-radius:6px;background:#f6f8fa;box-shadow:inset 0 -1px 0 #d1d9e0"></div>
<div class="t" style="left:804.07px;top:923px;font-size:14.8px;color:#1f2328;font-family:'Liberation Mono',monospace;-webkit-text-stroke:0.12px #1f2328;letter-spacing:-0.063px;">tab</div>
<div class="t" style="left:842.33px;top:921px;font-size:16.9px;color:#5a6168;font-family:'Liberation Sans',sans-serif;-webkit-text-stroke:0.25px #5a6168;letter-spacing:0.469px;">to move to the next interactive element on the page.</div>
<div class="t" style="left:61.32px;top:966px;font-size:16.9px;color:#5a6168;font-family:'Liberation Sans',sans-serif;-webkit-text-stroke:0.25px #5a6168;letter-spacing:0.549px;">Use</div>
<div class="a" style="left:97.7px;top:963.2px;width:140.7px;height:22.5px;border:1px solid #d4d9de;border-radius:6px;background:#f6f8fa;box-shadow:inset 0 -1px 0 #d1d9e0"></div>
<div class="t" style="left:102.66px;top:969px;font-size:14.8px;color:#1f2328;font-family:'Liberation Mono',monospace;-webkit-text-stroke:0.12px #1f2328;letter-spacing:-0.317px;">Control + Space</div>
<div class="t" style="left:244.12px;top:966px;font-size:16.9px;color:#5a6168;font-family:'Liberation Sans',sans-serif;-webkit-text-stroke:0.25px #5a6168;letter-spacing:1.029px;">or</div>
<div class="a" style="left:265.4px;top:963.2px;width:132.60000000000002px;height:22.5px;border:1px solid #d4d9de;border-radius:6px;background:#f6f8fa;box-shadow:inset 0 -1px 0 #d1d9e0"></div>
<div class="t" style="left:270.76px;top:969px;font-size:14.8px;color:#1f2328;font-family:'Liberation Mono',monospace;-webkit-text-stroke:0.12px #1f2328;letter-spacing:-0.303px;">Option + Space</div>
<div class="t" style="left:403.83px;top:966px;font-size:16.9px;color:#5a6168;font-family:'Liberation Sans',sans-serif;-webkit-text-stroke:0.25px #5a6168;letter-spacing:0.532px;">to trigger autocomplete in most situations.</div>
<div class="a" style="left:1377px;top:244px;width:600px;height:748px;border:1px solid #d4d9de;border-radius:8px;background:#fff"></div>
<div class="t" style="left:1409.24px;top:268px;font-size:18.2px;color:#1f2328;font-family:'Liberation Sans',sans-serif;-webkit-text-stroke:0.8px #1f2328;letter-spacing:1.170px;">Marketplace</div>
<div class="t" style="left:1552.84px;top:268px;font-size:18.2px;color:#1f2328;font-family:'Liberation Sans',sans-serif;-webkit-text-stroke:0.25px #1f2328;letter-spacing:0.721px;">Documentation</div>
<div class="a" style="left:1378px;top:306px;width:598px;height:1px;background:#d4d9de"></div>
<div class="a" style="left:1399px;top:304.5px;width:130.5px;height:3.0px;background:#ea927b;border-radius:1px"></div>
<div class="a" style="left:1400px;top:328px;width:555px;height:42px;border:1px solid #d4d9de;border-radius:8px;background:#f6f8fa"></div>
<div class="t" style="left:1415.69px;top:341px;font-size:18.2px;color:#5a6168;font-family:'Liberation Sans',sans-serif;-webkit-text-stroke:0.25px #5a6168;letter-spacing:0.512px;">Search Marketplace for Actions</div>
<div class="t" style="left:1398.24px;top:396px;font-size:18.2px;color:#1f2328;font-family:'Liberation Sans',sans-serif;-webkit-text-stroke:0.8px #1f2328;letter-spacing:1.058px;">Featured Actions</div>
<div class="a" style="left:1378px;top:245px;width:598px;height:746px;overflow:hidden;border-radius:0 0 7px 7px">
</div>
<div class="a" style="left:1399.6px;top:439.1px;width:51.200000000000045px;height:51.39999999999998px;border-radius:50%;background:#2d66d6;box-shadow:0 3px 6px rgba(0,0,0,0.12)"></div>
<div class="a" style="left:1412px;top:451.6px;width:26.5px;height:26.399999999999977px;border-radius:50%;background:#fff"></div>
<svg style="left:1421.5px;top:458.0px" width="11" height="14" viewBox="0 0 11 14" fill="#2d66d6"><path d="M0.3 0.6 Q0.3 0 0.9 0.3 L10.4 6.5 Q10.9 7 10.4 7.5 L0.9 13.7 Q0.3 14 0.3 13.4Z"/></svg>
<div class="t" style="left:1472.19px;top:443px;font-size:18.2px;color:#1f2328;font-family:'Liberation Sans',sans-serif;-webkit-text-stroke:0.8px #1f2328;letter-spacing:1.032px;">Cache</div>
<div class="t" style="left:1472.29px;top:464px;font-size:16.4px;color:#5a6168;font-family:'Liberation Sans',sans-serif;-webkit-text-stroke:0.25px #5a6168;letter-spacing:0.284px;">By actions</div>
<div class="t" style="left:1471.99px;top:490px;font-size:18.2px;color:#5a6168;font-family:'Liberation Sans',sans-serif;-webkit-text-stroke:0.25px #5a6168;letter-spacing:0.504px;">Cache artifacts like dependencies and build</div>
<div class="t" style="left:1472.17px;top:512px;font-size:18.2px;color:#5a6168;font-family:'Liberation Sans',sans-serif;-webkit-text-stroke:0.25px #5a6168;letter-spacing:0.576px;">outputs to improve workflow execution time</div>
<svg style="left:1897.20px;top:439.50px;" width="20.8" height="20.8" viewBox="0 0 16 16" fill="#5a6168"><path d="M8 .25a.75.75 0 0 1 .673.418l1.882 3.815 4.21.612a.75.75 0 0 1 .416 1.279l-3.046 2.97.719 4.192a.751.751 0 0 1-1.088.791L8 12.347l-3.766 1.98a.75.75 0 0 1-1.088-.79l.72-4.194L.818 6.374a.75.75 0 0 1 .416-1.28l4.21-.611L7.327.668A.75.75 0 0 1 8 .25Zm0 2.445L6.615 5.5a.75.75 0 0 1-.564.41l-3.097.45 2.24 2.184a.75.75 0 0 1 .216.664l-.528 3.084 2.769-1.456a.75.75 0 0 1 .698 0l2.77 1.456-.53-3.084a.75.75 0 0 1 .216-.664l2.24-2.183-3.096-.45a.75.75 0 0 1-.564-.41L8 2.694Z"/></svg>
<div class="t" style="left:1923.27px;top:443px;font-size:16.3px;color:#5a6168;font-family:'Liberation Sans',sans-serif;-webkit-text-stroke:0.25px #5a6168;letter-spacing:0.275px;">4.9k</div>
<div class="a" style="left:1399.6px;top:564.1999999999999px;width:51.200000000000045px;height:51.40000000000009px;border-radius:50%;background:#2d66d6;box-shadow:0 3px 6px rgba(0,0,0,0.12)"></div>
<div class="a" style="left:1412px;top:576.6999999999999px;width:26.5px;height:26.40000000000009px;border-radius:50%;background:#fff"></div>
<svg style="left:1421.5px;top:583.1px" width="11" height="14" viewBox="0 0 11 14" fill="#2d66d6"><path d="M0.3 0.6 Q0.3 0 0.9 0.3 L10.4 6.5 Q10.9 7 10.4 7.5 L0.9 13.7 Q0.3 14 0.3 13.4Z"/></svg>
<div class="t" style="left:1472.19px;top:568px;font-size:18.2px;color:#1f2328;font-family:'Liberation Sans',sans-serif;-webkit-text-stroke:0.8px #1f2328;letter-spacing:0.893px;">Setup Node.js environment</div>
<div class="t" style="left:1472.29px;top:589px;font-size:16.4px;color:#5a6168;font-family:'Liberation Sans',sans-serif;-webkit-text-stroke:0.25px #5a6168;letter-spacing:0.284px;">By actions</div>
<div class="t" style="left:1471.99px;top:615px;font-size:18.2px;color:#5a6168;font-family:'Liberation Sans',sans-serif;-webkit-text-stroke:0.25px #5a6168;letter-spacing:0.463px;">Setup a Node.js environment by adding</div>
<div class="t" style="left:1471.81px;top:638px;font-size:18.2px;color:#5a6168;font-family:'Liberation Sans',sans-serif;-webkit-text-stroke:0.25px #5a6168;letter-spacing:0.556px;">problem matchers and optionally downloading</div>
<div class="t" style="left:1472.17px;top:660px;font-size:18.2px;color:#5a6168;font-family:'Liberation Sans',sans-serif;-webkit-text-stroke:0.25px #5a6168;letter-spacing:0.468px;">and adding it to the PATH</div>
<svg style="left:1897.20px;top:564.60px;" width="20.8" height="20.8" viewBox="0 0 16 16" fill="#5a6168"><path d="M8 .25a.75.75 0 0 1 .673.418l1.882 3.815 4.21.612a.75.75 0 0 1 .416 1.279l-3.046 2.97.719 4.192a.751.751 0 0 1-1.088.791L8 12.347l-3.766 1.98a.75.75 0 0 1-1.088-.79l.72-4.194L.818 6.374a.75.75 0 0 1 .416-1.28l4.21-.611L7.327.668A.75.75 0 0 1 8 .25Zm0 2.445L6.615 5.5a.75.75 0 0 1-.564.41l-3.097.45 2.24 2.184a.75.75 0 0 1 .216.664l-.528 3.084 2.769-1.456a.75.75 0 0 1 .698 0l2.77 1.456-.53-3.084a.75.75 0 0 1 .216-.664l2.24-2.183-3.096-.45a.75.75 0 0 1-.564-.41L8 2.694Z"/></svg>
<div class="t" style="left:1923.27px;top:568px;font-size:16.3px;color:#5a6168;font-family:'Liberation Sans',sans-serif;-webkit-text-stroke:0.25px #5a6168;letter-spacing:0.275px;">4.3k</div>
<div class="a" style="left:1399.6px;top:711.3px;width:51.200000000000045px;height:51.40000000000009px;border-radius:50%;background:#2d66d6;box-shadow:0 3px 6px rgba(0,0,0,0.12)"></div>
<div class="a" style="left:1412px;top:723.8px;width:26.5px;height:26.40000000000009px;border-radius:50%;background:#fff"></div>
<svg style="left:1421.5px;top:730.2px" width="11" height="14" viewBox="0 0 11 14" fill="#2d66d6"><path d="M0.3 0.6 Q0.3 0 0.9 0.3 L10.4 6.5 Q10.9 7 10.4 7.5 L0.9 13.7 Q0.3 14 0.3 13.4Z"/></svg>
<div class="t" style="left:1471.83px;top:715px;font-size:18.2px;color:#1f2328;font-family:'Liberation Sans',sans-serif;-webkit-text-stroke:0.8px #1f2328;letter-spacing:0.965px;">Upload a Build Artifact</div>
<div class="t" style="left:1472.29px;top:736px;font-size:16.4px;color:#5a6168;font-family:'Liberation Sans',sans-serif;-webkit-text-stroke:0.25px #5a6168;letter-spacing:0.284px;">By actions</div>
<div class="t" style="left:1471.63px;top:762px;font-size:18.2px;color:#5a6168;font-family:'Liberation Sans',sans-serif;-webkit-text-stroke:0.25px #5a6168;letter-spacing:0.508px;">Upload a build artifact that can be used by</div>
<div class="t" style="left:1472.35px;top:785px;font-size:18.2px;color:#5a6168;font-family:'Liberation Sans',sans-serif;-webkit-text-stroke:0.25px #5a6168;letter-spacing:0.617px;">subsequent workflow steps</div>
<svg style="left:1897.20px;top:711.70px;" width="20.8" height="20.8" viewBox="0 0 16 16" fill="#5a6168"><path d="M8 .25a.75.75 0 0 1 .673.418l1.882 3.815 4.21.612a.75.75 0 0 1 .416 1.279l-3.046 2.97.719 4.192a.751.751 0 0 1-1.088.791L8 12.347l-3.766 1.98a.75.75 0 0 1-1.088-.79l.72-4.194L.818 6.374a.75.75 0 0 1 .416-1.28l4.21-.611L7.327.668A.75.75 0 0 1 8 .25Zm0 2.445L6.615 5.5a.75.75 0 0 1-.564.41l-3.097.45 2.24 2.184a.75.75 0 0 1 .216.664l-.528 3.084 2.769-1.456a.75.75 0 0 1 .698 0l2.77 1.456-.53-3.084a.75.75 0 0 1 .216-.664l2.24-2.183-3.096-.45a.75.75 0 0 1-.564-.41L8 2.694Z"/></svg>
<div class="t" style="left:1922.95px;top:715px;font-size:16.3px;color:#5a6168;font-family:'Liberation Sans',sans-serif;-webkit-text-stroke:0.25px #5a6168;letter-spacing:0.384px;">3.6k</div>
<div class="a" style="left:1399.6px;top:836.0999999999999px;width:51.200000000000045px;height:51.40000000000009px;border-radius:50%;background:#2d66d6;box-shadow:0 3px 6px rgba(0,0,0,0.12)"></div>
<div class="a" style="left:1412px;top:848.5999999999999px;width:26.5px;height:26.40000000000009px;border-radius:50%;background:#fff"></div>
<svg style="left:1421.5px;top:855.0px" width="11" height="14" viewBox="0 0 11 14" fill="#2d66d6"><path d="M0.3 0.6 Q0.3 0 0.9 0.3 L10.4 6.5 Q10.9 7 10.4 7.5 L0.9 13.7 Q0.3 14 0.3 13.4Z"/></svg>
<div class="t" style="left:1472.19px;top:840px;font-size:18.2px;color:#1f2328;font-family:'Liberation Sans',sans-serif;-webkit-text-stroke:0.8px #1f2328;letter-spacing:0.721px;">Setup Java JDK</div>
<div class="t" style="left:1472.29px;top:861px;font-size:16.4px;color:#5a6168;font-family:'Liberation Sans',sans-serif;-webkit-text-stroke:0.25px #5a6168;letter-spacing:0.284px;">By actions</div>
<div class="t" style="left:1471.99px;top:887px;font-size:18.2px;color:#5a6168;font-family:'Liberation Sans',sans-serif;-webkit-text-stroke:0.25px #5a6168;letter-spacing:0.405px;">Set up a specific version of the Java JDK and</div>
<div class="t" style="left:1472.17px;top:909px;font-size:18.2px;color:#5a6168;font-family:'Liberation Sans',sans-serif;-webkit-text-stroke:0.25px #5a6168;letter-spacing:0.543px;">add the command-line tools to the PATH</div>
<svg style="left:1899.90px;top:836.50px;" width="20.8" height="20.8" viewBox="0 0 16 16" fill="#5a6168"><path d="M8 .25a.75.75 0 0 1 .673.418l1.882 3.815 4.21.612a.75.75 0 0 1 .416 1.279l-3.046 2.97.719 4.192a.751.751 0 0 1-1.088.791L8 12.347l-3.766 1.98a.75.75 0 0 1-1.088-.79l.72-4.194L.818 6.374a.75.75 0 0 1 .416-1.28l4.21-.611L7.327.668A.75.75 0 0 1 8 .25Zm0 2.445L6.615 5.5a.75.75 0 0 1-.564.41l-3.097.45 2.24 2.184a.75.75 0 0 1 .216.664l-.528 3.084 2.769-1.456a.75.75 0 0 1 .698 0l2.77 1.456-.53-3.084a.75.75 0 0 1 .216-.664l2.24-2.183-3.096-.45a.75.75 0 0 1-.564-.41L8 2.694Z"/></svg>
<div class="t" style="left:1925.16px;top:840px;font-size:16.3px;color:#5a6168;font-family:'Liberation Sans',sans-serif;-webkit-text-stroke:0.25px #5a6168;letter-spacing:-0.486px;">1.7k</div>
<div class="a" style="left:1399.6px;top:960.3px;width:51.200000000000045px;height:51.40000000000009px;border-radius:50%;background:#2d66d6;box-shadow:0 3px 6px rgba(0,0,0,0.12)"></div>
<div class="a" style="left:1412px;top:972.8px;width:26.5px;height:26.40000000000009px;border-radius:50%;background:#fff"></div>
<svg style="left:1421.5px;top:979.2px" width="11" height="14" viewBox="0 0 11 14" fill="#2d66d6"><path d="M0.3 0.6 Q0.3 0 0.9 0.3 L10.4 6.5 Q10.9 7 10.4 7.5 L0.9 13.7 Q0.3 14 0.3 13.4Z"/></svg>
<div class="t" style="left:1472.19px;top:964px;font-size:18.2px;color:#1f2328;font-family:'Liberation Sans',sans-serif;-webkit-text-stroke:0.8px #1f2328;letter-spacing:0.853px;">Setup Go environment</div>
<div class="t" style="left:1472.29px;top:985px;font-size:16.4px;color:#5a6168;font-family:'Liberation Sans',sans-serif;-webkit-text-stroke:0.25px #5a6168;letter-spacing:0.284px;">By actions</div>
<svg style="left:1899.90px;top:960.70px;" width="20.8" height="20.8" viewBox="0 0 16 16" fill="#5a6168"><path d="M8 .25a.75.75 0 0 1 .673.418l1.882 3.815 4.21.612a.75.75 0 0 1 .416 1.279l-3.046 2.97.719 4.192a.751.751 0 0 1-1.088.791L8 12.347l-3.766 1.98a.75.75 0 0 1-1.088-.79l.72-4.194L.818 6.374a.75.75 0 0 1 .416-1.28l4.21-.611L7.327.668A.75.75 0 0 1 8 .25Zm0 2.445L6.615 5.5a.75.75 0 0 1-.564.41l-3.097.45 2.24 2.184a.75.75 0 0 1 .216.664l-.528 3.084 2.769-1.456a.75.75 0 0 1 .698 0l2.77 1.456-.53-3.084a.75.75 0 0 1 .216-.664l2.24-2.183-3.096-.45a.75.75 0 0 1-.564-.41L8 2.694Z"/></svg>
<div class="t" style="left:1925.16px;top:964px;font-size:16.3px;color:#5a6168;font-family:'Liberation Sans',sans-serif;-webkit-text-stroke:0.25px #5a6168;letter-spacing:-0.486px;">1.5k</div>
<div class="a" style="left:1370px;top:991px;width:620px;height:6px;background:#fff"></div>
<div class="a" style="left:1377px;top:960px;width:600px;height:32px;border:1px solid #d4d9de;border-top:none;border-radius:0 0 8px 8px;background:transparent"></div>
<svg style="left:0;top:0" width="2022" height="1022" viewBox="0 0 2022 1022" fill="none" stroke-linecap="square"><g stroke="#4a4a4a" stroke-width="2.1"><path transform="translate(1735.3,969.4)" d="M1 7H7 M4.5 2V20L3 21 M1 16L7 12.5 M9 3H22V8H9 M9 3V14Q9 19 8 22 M15.5 9V21 M11.5 12V16H20V12 M11.5 18V21.5H21.5V18"/><path transform="translate(1760.6,969.4)" d="M12 1L2 10 M12 1L22 10 M7 10H17 M5 14.5H19 M12 10V21 M7.5 16L9 19 M16.5 16L15 19 M2 21.5H22"/><path transform="translate(1785.9,969.4)" d="M1 7H7 M4.5 2V20L3 21 M1 16L7 12.5 M9 6H23 M16 2V10 M10 11H21L11 22 M12.5 13.5L22 22"/><path transform="translate(1811.2,969.4)" d="M2 8H22 M12 2V22 M11 9.5L2 19 M13 9.5L22 19 M16 3L18 5"/><path transform="translate(1836.5,969.4)" d="M4 2L6 4 M1 8H8L2 16 M5 11V22 M5.5 13L8 16 M16 3V21 M10 10H22 M9 21.5H23"/><path transform="translate(1861.8,969.4)" d="M22 3H2V21.5H22 M7 7L18 18 M18 7L7 18"/></g><g stroke="#ececec" stroke-width="1.9"><path transform="translate(1734.4,968.5)" d="M1 7H7 M4.5 2V20L3 21 M1 16L7 12.5 M9 3H22V8H9 M9 3V14Q9 19 8 22 M15.5 9V21 M11.5 12V16H20V12 M11.5 18V21.5H21.5V18"/><path transform="translate(1759.7,968.5)" d="M12 1L2 10 M12 1L22 10 M7 10H17 M5 14.5H19 M12 10V21 M7.5 16L9 19 M16.5 16L15 19 M2 21.5H22"/><path transform="translate(1785.0,968.5)" d="M1 7H7 M4.5 2V20L3 21 M1 16L7 12.5 M9 6H23 M16 2V10 M10 11H21L11 22 M12.5 13.5L22 22"/><path transform="translate(1810.3,968.5)" d="M2 8H22 M12 2V22 M11 9.5L2 19 M13 9.5L22 19 M16 3L18 5"/><path transform="translate(1835.6,968.5)" d="M4 2L6 4 M1 8H8L2 16 M5 11V22 M5.5 13L8 16 M16 3V21 M10 10H22 M9 21.5H23"/><path transform="translate(1860.9,968.5)" d="M22 3H2V21.5H22 M7 7L18 18 M18 7L7 18"/></g></svg>
<div class="t" style="left:1890.2px;top:962px;font-size:31.5px;color:#ececec;font-family:'Liberation Sans',sans-serif;transform:scaleX(0.85);transform-origin:0 0;letter-spacing:0.6px;text-shadow:1.2px 1.2px 0.5px #3a3a3a">@Apifox</div>
</div></body></html>
